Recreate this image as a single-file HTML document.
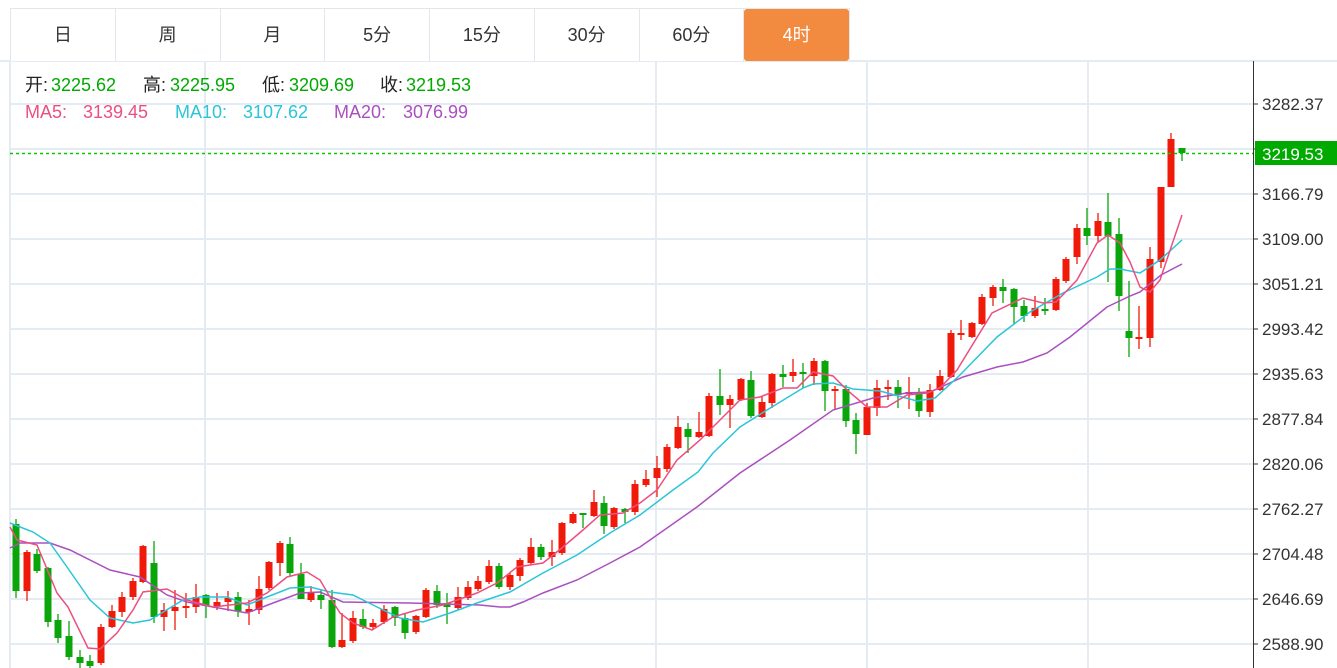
<!DOCTYPE html>
<html><head><meta charset="utf-8">
<style>
html,body{margin:0;padding:0;background:#fff;width:1337px;height:668px;overflow:hidden;font-family:"Liberation Sans","Noto Sans CJK SC",sans-serif;position:relative;}
svg{position:absolute;left:0;top:0;}
#tabs{position:absolute;left:10px;top:8px;height:53px;width:840px;display:flex;border:1px solid #e3e6ea;border-bottom:none;box-sizing:border-box;background:#fff;}
#tabs div{width:105px;height:52px;line-height:52px;text-align:center;font-size:18px;color:#333;border-right:1px solid #e3e6ea;box-sizing:border-box;}
#tabs div.on{background:#f28a40;color:#fff;border-radius:3px;border-right:none;}
.i{position:absolute;font-size:18px;white-space:pre;line-height:20px;}
.g{color:#0a0}
</style></head><body>
<svg width="1337" height="668" xmlns="http://www.w3.org/2000/svg">
<g stroke="#e4ebf2" stroke-width="2" fill="none">
<path d="M0 61H1337M10 61V668M205 61V668M656 61V668M867 61V668M1088 61V668"/>
<path d="M10 104H1253M10 149H1253M10 194H1253M10 239H1253M10 284H1253M10 329H1253M10 374H1253M10 419H1253M10 464H1253M10 509H1253M10 554H1253M10 599H1253M10 644H1253"/>
</g>
<path d="M1253.5 61V668M1253 104h5M1253 149h5M1253 194h5M1253 239h5M1253 284h5M1253 329h5M1253 374h5M1253 419h5M1253 464h5M1253 509h5M1253 554h5M1253 599h5M1253 644h5" stroke="#333" stroke-width="1" fill="none"/>
<g font-family="Liberation Sans, sans-serif" font-size="17" fill="#333">
<text x="1262" y="110">3282.37</text>
<text x="1262" y="200">3166.79</text>
<text x="1262" y="245">3109.00</text>
<text x="1262" y="290">3051.21</text>
<text x="1262" y="335">2993.42</text>
<text x="1262" y="380">2935.63</text>
<text x="1262" y="425">2877.84</text>
<text x="1262" y="470">2820.06</text>
<text x="1262" y="515">2762.27</text>
<text x="1262" y="560">2704.48</text>
<text x="1262" y="605">2646.69</text>
<text x="1262" y="650">2588.90</text>
</g>
<path stroke="#0aa50a" stroke-width="1.3" fill="none" d="M16 519V598M37 549V573M48 567V627M58 614V643M69 621V660M80 650V668M90 655V668M154 541V623M206 594V618M238 592V617M290 537V576M301 563V599M321 590V609M332 590V648M363 609V629M395 606V626M405 614V639M437 585V608M447 593V624M499 563V589M541 544V560M583 513V528M604 496V534M625 508V523M688 423V453M720 369V415M751 371V418M783 365V387M803 363V388M825 360V411M846 385V427M856 413V454M898 380V408M919 388V417M1003 279V303M1014 288V324M1024 300V322M1045 298V315M1087 208V245M1108 193V282M1119 218V311M1129 281V357M1182 148V161"/>
<path fill="#0aa50a" d="M12.5 524h7V591h-7zM33.5 554h7V571h-7zM44.5 568h7V622h-7zM54.5 620h7V638h-7zM65.5 636h7V657h-7zM76.5 657h7V663h-7zM86.5 661h7V666h-7zM150.5 563h7V617h-7zM202.5 595h7V606h-7zM234.5 597h7V611h-7zM286.5 544h7V573h-7zM297.5 574h7V599h-7zM317.5 595h7V600h-7zM328.5 600h7V647h-7zM359.5 619h7V627h-7zM391.5 607h7V618h-7zM401.5 618h7V633h-7zM433.5 591h7V605h-7zM443.5 603h7V607h-7zM495.5 566h7V587h-7zM537.5 547h7V557h-7zM579.5 513h7V515h-7zM600.5 503h7V526h-7zM621.5 509h7V512h-7zM684.5 429h7V437h-7zM716.5 396h7V405h-7zM747.5 380h7V416h-7zM779.5 374h7V377h-7zM799.5 372h7V374h-7zM821.5 361h7V391h-7zM842.5 389h7V421h-7zM852.5 420h7V434h-7zM894.5 387h7V395h-7zM915.5 392h7V411h-7zM999.5 287h7V291h-7zM1010.5 289h7V307h-7zM1020.5 306h7V316h-7zM1041.5 309h7V311h-7zM1083.5 228h7V236h-7zM1104.5 222h7V236h-7zM1115.5 234h7V296h-7zM1125.5 331h7V338h-7zM1178.5 148h7V153h-7z"/>
<path stroke="#f01a0a" stroke-width="1.3" fill="none" d="M27 550V601M101 624V665M112 605V628M122 592V617M133 578V600M143 545V583M164 603V631M175 590V630M186 593V618M196 584V613M217 593V610M228 591V611M249 600V625M259 576V614M269 561V590M280 541V576M311 586V602M342 613V648M353 611V643M373 619V630M384 605V624M416 615V634M426 588V618M458 587V610M468 581V600M478 576V591M489 560V584M510 573V590M520 558V581M531 538V565M552 540V566M562 522V555M573 512V524M594 490V517M614 507V529M635 480V515M646 470V487M657 456V497M667 444V472M678 416V449M699 412V438M709 393V437M730 395V428M741 378V401M762 396V418M772 373V408M793 359V382M814 358V385M835 386V410M867 403V435M877 380V416M888 380V400M909 377V409M930 384V417M940 370V391M951 330V378M961 320V340M972 322V338M982 294V325M993 285V306M1035 296V318M1056 277V311M1066 257V283M1077 224V264M1098 213V242M1139 306V349M1150 247V347M1161 187V268M1171 133V187"/>
<path fill="#f01a0a" d="M23.5 552h7V591h-7zM97.5 627h7V663h-7zM108.5 611h7V627h-7zM118.5 597h7V612h-7zM129.5 581h7V597h-7zM139.5 546h7V582h-7zM160.5 610h7V617h-7zM171.5 607h7V611h-7zM182.5 606h7V608h-7zM192.5 597h7V607h-7zM213.5 602h7V606h-7zM224.5 598h7V602h-7zM245.5 609h7V612h-7zM255.5 589h7V610h-7zM265.5 562h7V588h-7zM276.5 543h7V563h-7zM307.5 593h7V600h-7zM338.5 640h7V647h-7zM349.5 618h7V641h-7zM369.5 623h7V627h-7zM380.5 609h7V622h-7zM412.5 616h7V632h-7zM422.5 590h7V617h-7zM454.5 597h7V608h-7zM464.5 587h7V598h-7zM474.5 581h7V589h-7zM485.5 566h7V582h-7zM506.5 575h7V587h-7zM516.5 560h7V576h-7zM527.5 547h7V563h-7zM548.5 552h7V557h-7zM558.5 523h7V553h-7zM569.5 514h7V523h-7zM590.5 502h7V516h-7zM610.5 508h7V527h-7zM631.5 484h7V512h-7zM642.5 479h7V485h-7zM653.5 468h7V478h-7zM663.5 447h7V469h-7zM674.5 427h7V448h-7zM695.5 432h7V437h-7zM705.5 396h7V436h-7zM726.5 399h7V405h-7zM737.5 379h7V400h-7zM758.5 402h7V417h-7zM768.5 374h7V403h-7zM789.5 372h7V376h-7zM810.5 361h7V376h-7zM831.5 389h7V391h-7zM863.5 407h7V435h-7zM873.5 388h7V408h-7zM884.5 387h7V389h-7zM905.5 392h7V394h-7zM926.5 390h7V412h-7zM936.5 376h7V390h-7zM947.5 333h7V377h-7zM957.5 333h7V335h-7zM968.5 323h7V337h-7zM978.5 297h7V324h-7zM989.5 287h7V298h-7zM1031.5 308h7V316h-7zM1052.5 279h7V310h-7zM1062.5 259h7V281h-7zM1073.5 228h7V257h-7zM1094.5 221h7V236h-7zM1135.5 337h7V339h-7zM1146.5 259h7V338h-7zM1157.5 187h7V262h-7zM1167.5 139h7V187h-7z"/>
<polyline fill="none" stroke="#ab4fc0" stroke-width="1.5" points="10,548 20,543 50,543 70,550 110,570 140,577 167,595 187,602 213,607 247,613 273,603 300,593 320,592 343,602 410,603 480,605 500,607 510,607 523,602 543,593 577,580 610,563 640,547 697,507 740,473 790,440 833,410 873,398 907,393 930,392 963,377 997,367 1023,362 1047,353 1070,337 1107,307 1130,296 1140,292 1161,275 1182,264"/>
<polyline fill="none" stroke="#2bc5d9" stroke-width="1.5" points="10,523 33,532 50,543 67,567 90,600 110,618 133,623 150,620 183,600 200,597 227,597 247,605 267,597 290,588 310,587 330,592 353,595 377,607 400,618 423,622 450,613 477,603 510,592 543,573 577,555 610,533 640,515 673,490 698,472 713,453 740,427 767,410 803,388 813,384 833,383 853,389 880,391 917,401 935,398 960,375 997,337 1030,312 1063,293 1097,277 1110,269 1120,269 1140,273 1160,260 1182,240"/>
<polyline fill="none" stroke="#ec4f7f" stroke-width="1.5" points="10,527 17,540 37,545 57,593 68,607 88,648 100,649 117,633 133,610 143,592 167,589 187,600 213,607 247,603 267,593 287,577 307,572 320,580 330,597 340,613 353,623 372,630 393,617 417,610 443,605 477,593 497,583 517,567 543,563 563,547 583,530 600,515 623,513 640,503 657,490 677,460 700,440 720,420 740,400 760,397 783,388 797,388 813,372 833,376 847,390 867,407 887,407 907,395 927,393 940,388 957,370 992,313 1023,298 1043,303 1056,302 1077,280 1097,243 1108,235 1120,243 1130,262 1140,287 1150,292 1160,280 1182,215"/>
<path d="M10 153.5H1253" stroke="#0c0" stroke-width="1.5" stroke-dasharray="3,3" fill="none"/>
<rect x="1255" y="141" width="82" height="24" fill="#0a0"/>
<text x="1262" y="160" font-family="Liberation Sans, sans-serif" font-size="17" fill="#fff">3219.53</text>
</svg>
<div id="tabs"><div>日</div><div>周</div><div>月</div><div>5分</div><div>15分</div><div>30分</div><div>60分</div><div class="on">4时</div></div>
<div class="i" style="left:25px;top:75px;color:#222">开:</div><div class="i g" style="left:51px;top:75px">3225.62</div>
<div class="i" style="left:143px;top:75px;color:#222">高:</div><div class="i g" style="left:170px;top:75px">3225.95</div>
<div class="i" style="left:262px;top:75px;color:#222">低:</div><div class="i g" style="left:289px;top:75px">3209.69</div>
<div class="i" style="left:380px;top:75px;color:#222">收:</div><div class="i g" style="left:406px;top:75px">3219.53</div>
<div class="i" style="left:25px;top:102px;color:#ec4f7f">MA5:</div><div class="i" style="left:83px;top:102px;color:#ec4f7f">3139.45</div>
<div class="i" style="left:175px;top:102px;color:#2bc5d9">MA10:</div><div class="i" style="left:243px;top:102px;color:#2bc5d9">3107.62</div>
<div class="i" style="left:334px;top:102px;color:#ab4fc0">MA20:</div><div class="i" style="left:403px;top:102px;color:#ab4fc0">3076.99</div>
</body></html>
